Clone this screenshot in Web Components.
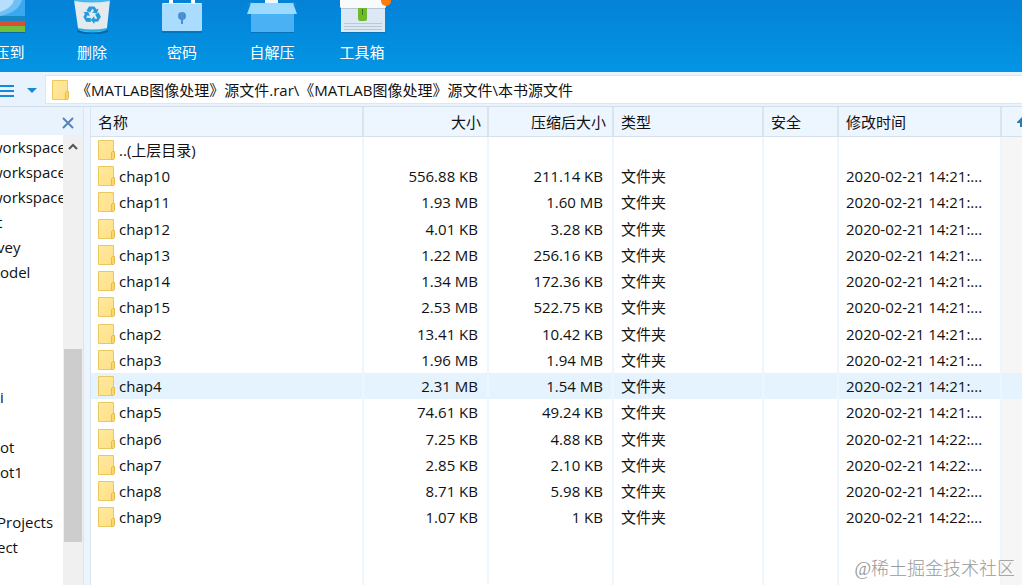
<!DOCTYPE html>
<html lang="zh-CN">
<head>
<meta charset="utf-8">
<title>压缩文件管理</title>
<style>
    html, body{
        margin:0;
        height:100%;
    }
    body{
        font-family:"Open Sans", "Noto Sans CJK SC", sans-serif;
        font-size:15px;
        color:#111;
        overflow:hidden;
    }
</style>
</head>
<body>
<archive-app></archive-app>

<script>
const folder = `
    <svg class="folder" width="18" height="20" viewBox="0 0 18 20" aria-hidden="true">
        <defs><linearGradient id="f" x1="0" y1="0" x2="1" y2="1">
            <stop offset="0" stop-color="#ffeaa2"/><stop offset="1" stop-color="#ffdf83"/>
        </linearGradient></defs>
        <path d="M.5 .5H15.5V19.5H.5Z" fill="url(#f)" stroke="#ecc85c"/>
        <path d="M13.5 19.5V12.5L14.5 11.5H16.5V18.5L15.5 19.5Z" fill="#f7d673" stroke="#e6bd49"/>
    </svg>`

const icons = {
    extract: `
        <path d="M0 0H53V17H0Z" fill="#38a9ee"/>
        <path d="M0 0H50Q47 12 28 16H0Z" fill="#6fc0f6"/>
        <path d="M0 0H42Q40 8 28 12H0Z" fill="#b5dffd"/>
        <path d="M0 16H53V21H0Z" fill="#1487c4"/>
        <path d="M0 21H53V26H0Z" fill="#d94f35"/>
        <path d="M0 26H53V32H0Z" fill="#72bf3b"/>
        <path d="M0 32H53V33H0Z" fill="#0768a9"/>`,
    trash: `
        <path d="M15 30Q30 36 46 30V32Q30 37 15 32Z" fill="#0768a9"/>
        <path d="M12 0H48L45 28Q44 32 30 32Q17 32 16 28Z" fill="#e4ebef"/>
        <path d="M12 0H48V1Q30 4 12 1Z" fill="#45b8ed"/>
        <path d="M16 28Q30 31 45 28Q44 32 30 32Q17 32 16 28Z" fill="#27ade4"/>
        <g fill="#249add">
            <path id="a" d="M24.5 10.5L27 6.5H32.5L34.5 9.5L36.5 8.5L35 13.5L30 12.5L32 11L30.5 8.5L28 12.5Z"/>
            <use href="#a" transform="rotate(120 30 15)"/>
            <use href="#a" transform="rotate(240 30 15)"/>
        </g>`,
    lock: `
        <path d="M17 0H21V4H17ZM39 0H43V4H39Z" fill="#fff"/>
        <path d="M10 30H50V33H10Z" fill="#0768a9" opacity=".6"/>
        <rect x="10" y="3" width="40" height="28" rx="1" fill="#aadcff"/>
        <path d="M11 3H49V4H11Z" fill="#d8efff"/>
        <circle cx="30" cy="16" r="4" fill="#4b90d2"/>
        <path d="M29 18H31V24H29Z" fill="#4b90d2"/>`,
    box: `
        <path d="M9 3L4 7L10 1ZM51 3L56 7L50 1Z" fill="#47acec"/>
        <path d="M23 0H36V4H23Z" fill="#f1f7fc"/>
        <path d="M9 31H52V33H9Z" fill="#0768a9" opacity=".7"/>
        <path d="M9 14H52V32H9Z" fill="#4ab1f5"/>
        <path d="M9 3H51L55 14H5Z" fill="#9cdaff"/>`,
    tools: `
        <path d="M9 31H53V33H9Z" fill="#0768a9" opacity=".7"/>
        <path d="M9 8H53V32H9Z" fill="#dce9f5"/>
        <path d="M9 8H53V9H9Z" fill="#b7c7d6"/>
        <path d="M8 0H54V7L53 8H9L8 7Z" fill="#f8fafb"/>
        <path d="M12 23.5H50M12 26.5H50M12 29.5H50" stroke="#b8c9d9"/>
        <path d="M26 8H35V19Q35 21 33 21H28Q26 21 26 19Z" fill="#6fb92c"/>
        <path d="M30 9H31V15H30Z" fill="#3d7714"/>
        <circle cx="54" cy="1" r="5" fill="#ff7c0a"/>`
}

class ToolButton extends HTMLElement{
    constructor(){
        super()
        this.attachShadow({mode:'open'})
    }
    connectedCallback(){
        this.shadowRoot.innerHTML=`
        <style>
            :host{
                display:block;
                flex:none;
                width:90px;
            }
            button{
                display:flex;
                flex-direction:column;
                align-items:center;
                gap:8px;
                width:100%;
                padding:0;
                border:0;
                background:none;
                font:inherit;
                line-height:20px;
                color:#fff;
            }
            svg{
                display:block;
            }
        </style>
        <button type="button">
            <svg width="60" height="34" viewBox="0 0 60 34" aria-hidden="true">${icons[this.getAttribute('icon')]}</svg>
            <span><slot></slot></span>
        </button>
        `
    }
}

class ToolBar extends HTMLElement{
    constructor(){
        super()
        this.attachShadow({mode:'open'})
    }
    connectedCallback(){
        this.shadowRoot.innerHTML=`
        <style>
            :host{
                display:flex;
                flex:none;
                height:72px;
                background:linear-gradient(#0482d8, #0395e4);
                overflow:hidden;
            }
            nav{
                display:flex;
                margin-left:-43px;
            }
        </style>
        <nav><slot></slot></nav>
        `
    }
}

class AddressBar extends HTMLElement{
    constructor(){
        super()
        this.attachShadow({mode:'open'})
    }
    connectedCallback(){
        this.shadowRoot.innerHTML=`
        <style>
            :host{
                display:flex;
                flex:none;
                box-sizing:border-box;
                height:35px;
                padding:3px 0 2px;
                background:#e8f3fd;
                border-bottom:1px solid #d3e0ec;
            }
            .mode{
                display:flex;
                align-items:center;
                gap:13px;
                width:45px;
                padding:2px 0 0;
                border:0;
                background:none;
            }
            label{
                display:flex;
                flex:1;
                align-items:center;
                gap:6px;
                padding-left:6px;
                background:#fff;
                border:1px solid #dfe6f0;
                border-right:0;
            }
            input{
                flex:1;
                padding:0;
                border:0;
                outline:0;
                background:none;
                font:inherit;
                color:inherit;
            }
        </style>
        <button class="mode" type="button" aria-label="查看方式">
            <svg width="14" height="14" viewBox="0 0 14 14"><path d="M0 2H14M0 7H14M0 12H14" stroke="#1689d8" stroke-width="2"/></svg>
            <svg width="10" height="6" viewBox="0 0 10 6"><path d="M0 0H10L5 5Z" fill="#1689d8"/></svg>
        </button>
        <label>${folder}<input type="text" aria-label="路径" value="${this.getAttribute('path')}"></label>
        `
    }
}

// one entry per 25px line, the tree is scrolled sideways so long names are cut
const tree = ['workspace','workspace','workspace','t','vey','odel','','','','','i','','ot','ot1','','Projects','ect']
const shift = {workspace:'deep', t:'cut', vey:'cut', Projects:'cut', ect:'cut'}

class FolderTree extends HTMLElement{
    constructor(){
        super()
        this.attachShadow({mode:'open'})
    }
    connectedCallback(){
        this.shadowRoot.innerHTML=`
        <style>
            :host{
                display:flex;
                flex-direction:column;
                flex:none;
                width:83px;
                border-right:1px solid #dbe5f0;
            }
            header{
                display:flex;
                flex:none;
                align-items:center;
                justify-content:flex-end;
                box-sizing:border-box;
                height:28px;
                padding:4px 9px 0;
                background:#e8f3fd;
            }
            button{
                display:block;
                padding:0;
                border:0;
                background:none;
            }
            svg{
                display:block;
            }
            .body{
                display:flex;
                flex:1;
                min-height:0;
                overflow:hidden;
            }
            ul{
                flex:1;
                margin:0;
                padding:0;
                list-style:none;
                line-height:25px;
                white-space:nowrap;
                overflow:hidden;
            }
            li{
                height:25px;
            }
            .cut{
                margin-left:-3px;
            }
            .deep{
                margin-left:-9px;
            }
            .scroll{
                display:flex;
                flex-direction:column;
                align-items:center;
                width:20px;
                background:#f0f0f0;
            }
            .scroll button{
                padding:8px 0;
            }
            .thumb{
                width:18px;
                height:193px;
                margin-top:190px;
                background:#cdcdcd;
            }
        </style>
        <header>
            <button type="button" aria-label="关闭">
                <svg width="12" height="12" viewBox="0 0 12 12"><path d="M1 1L11 11M11 1L1 11" stroke="#5b82b8" stroke-width="2"/></svg>
            </button>
        </header>
        <div class="body">
            <ul>${tree.map(t => `<li class="${shift[t] || ''}">${t}</li>`).join('')}</ul>
            <div class="scroll">
                <button type="button" aria-label="向上滚动">
                    <svg width="10" height="8" viewBox="0 0 10 8"><path d="M1 6L5 2L9 6" fill="none" stroke="#555" stroke-width="2"/></svg>
                </button>
                <div class="thumb"></div>
            </div>
        </div>
        `
    }
}

const files = [
    ['chap10','556.88 KB','211.14 KB','21'],
    ['chap11','1.93 MB','1.60 MB','21'],
    ['chap12','4.01 KB','3.28 KB','21'],
    ['chap13','1.22 MB','256.16 KB','21'],
    ['chap14','1.34 MB','172.36 KB','21'],
    ['chap15','2.53 MB','522.75 KB','21'],
    ['chap2','13.41 KB','10.42 KB','21'],
    ['chap3','1.96 MB','1.94 MB','21'],
    ['chap4','2.31 MB','1.54 MB','21'],
    ['chap5','74.61 KB','49.24 KB','21'],
    ['chap6','7.25 KB','4.88 KB','22'],
    ['chap7','2.85 KB','2.10 KB','22'],
    ['chap8','8.71 KB','5.98 KB','22'],
    ['chap9','1.07 KB','1 KB','22']
]

class FileTable extends HTMLElement{
    constructor(){
        super()
        this.attachShadow({mode:'open'})
    }
    connectedCallback(){
        const rows = files.map(([name, size, packed, min]) => `
            <tr class="${name === 'chap4' ? 'hover' : ''}">
                <td><span class="name">${folder}${name}</span></td>
                <td class="num">${size}</td>
                <td class="num">${packed}</td>
                <td>文件夹</td>
                <td></td>
                <td>2020-02-21 14:${min}:...</td>
                <td></td>
            </tr>`).join('')
        this.shadowRoot.innerHTML=`
        <style>
            :host{
                display:block;
                flex:1;
                min-width:0;
                overflow:hidden;
            }
            table{
                width:100%;
                height:100%;
                table-layout:fixed;
                border-collapse:separate;
                border-spacing:0;
                line-height:20px;
                white-space:nowrap;
            }
            th, td{
                box-sizing:border-box;
                padding:0 0 0 7px;
                text-align:left;
                border-right:2px solid #edf5fe;
            }
            th{
                height:30px;
                font-weight:400;
                background:#edf5fe;
                border-right-color:#d9e4ef;
                border-bottom:1px solid #d5e0eb;
            }
            td{
                height:26px;
            }
            tr:nth-child(4n) td{
                height:27px;
            }
            th.num{
                padding-right:6px;
                text-align:right;
            }
            td.num{
                padding-right:9px;
                text-align:right;
            }
            th:last-child, td:last-child{
                padding:0;
                border-right:0;
            }
            td:last-child{
                background:#f6f6f6;
            }
            .hover td, .hover td:last-child{
                background:#e5f3ff;
            }
            tr.rest td{
                height:100%;
            }
            .name{
                display:flex;
                align-items:center;
                gap:3px;
            }
            th svg{
                display:block;
                margin-left:auto;
            }
        </style>
        <table>
            <colgroup>
                <col style="width:273px"><col style="width:125px"><col style="width:125px">
                <col style="width:150px"><col style="width:75px"><col style="width:163px"><col>
            </colgroup>
            <thead>
                <tr>
                    <th>名称</th><th class="num">大小</th><th class="num">压缩后大小</th>
                    <th>类型</th><th>安全</th><th>修改时间</th>
                    <th><svg width="5" height="10" viewBox="0 0 5 10"><path d="M0 5L5 0V10H3V6H0Z" fill="#2c7cab"/></svg></th>
                </tr>
            </thead>
            <tbody>
                <tr><td><span class="name">${folder}..(上层目录)</span></td><td></td><td></td><td></td><td></td><td></td><td></td></tr>
                ${rows}
                <tr class="rest"><td></td><td></td><td></td><td></td><td></td><td></td><td></td></tr>
            </tbody>
        </table>
        `
    }
}

class ArchiveApp extends HTMLElement{
    constructor(){
        super()
        this.attachShadow({mode:'open'})
    }
    connectedCallback(){
        this.shadowRoot.innerHTML=`
        <style>
            :host{
                display:flex;
                flex-direction:column;
                position:relative;
                height:100vh;
                background:#fff;
                overflow:hidden;
            }
            main{
                display:flex;
                flex:1;
                min-height:0;
            }
            .split{
                flex:none;
                width:6px;
                background:#edf4fd;
                border-right:1px solid #d7e4f1;
            }
            .mark{
                position:absolute;
                right:7px;
                bottom:4px;
                font-family:"Liberation Serif", "Noto Sans CJK SC", serif;
                font-size:18px;
                font-weight:300;
                line-height:24px;
                color:#999;
            }
        </style>
        <tool-bar>
            <tool-button icon="extract">解压到</tool-button>
            <tool-button icon="trash">删除</tool-button>
            <tool-button icon="lock">密码</tool-button>
            <tool-button icon="box">自解压</tool-button>
            <tool-button icon="tools">工具箱</tool-button>
        </tool-bar>
        <address-bar path="《MATLAB图像处理》源文件.rar\\《MATLAB图像处理》源文件\\本书源文件"></address-bar>
        <main>
            <folder-tree></folder-tree>
            <div class="split"></div>
            <file-table></file-table>
        </main>
        <div class="mark">@稀土掘金技术社区</div>
        `
    }
}

window.customElements.define('tool-button',ToolButton)
window.customElements.define('tool-bar',ToolBar)
window.customElements.define('address-bar',AddressBar)
window.customElements.define('folder-tree',FolderTree)
window.customElements.define('file-table',FileTable)
window.customElements.define('archive-app',ArchiveApp)
</script>
</body>
</html>
